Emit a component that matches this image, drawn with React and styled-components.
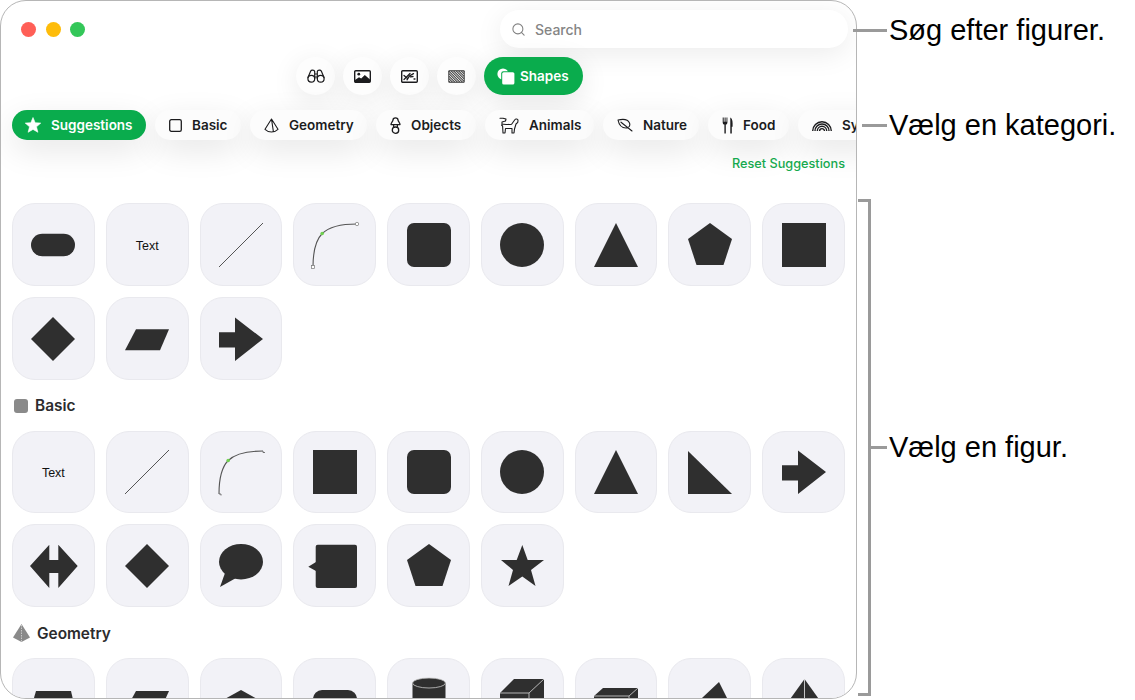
import React from "react";
import styled, { createGlobalStyle } from "styled-components";
import { Search } from "lucide-react";

const Global = createGlobalStyle`
  html, body { margin: 0; padding: 0; background: #fff; }
  body { font-family: Inter, "Liberation Sans", sans-serif; -webkit-font-smoothing: antialiased; }
`;

const Page = styled.div`
  position: relative;
  width: 1135px;
  height: 700px;
  overflow: hidden;
`;

const Window = styled.div`
  box-sizing: border-box;
  width: 857px;
  height: 699px;
  border: 1px solid #b6b6b6;
  border-radius: 26px;
  background: #fff;
  overflow: hidden;
`;

const TitleRow = styled.div`
  display: flex;
  align-items: center;
  justify-content: space-between;
  padding: 9px 8px 0 20px;
`;

const Lights = styled.div`
  display: flex;
  gap: 9.5px;
`;

const Light = styled.span`
  width: 15px;
  height: 15px;
  border-radius: 50%;
  background: ${(p) => p.$c};
`;

const SearchBox = styled.div`
  box-sizing: border-box;
  width: 348px;
  height: 38px;
  border-radius: 19px;
  background: #fff;
  box-shadow: 0 6px 28px rgba(0, 0, 0, 0.08);
  display: flex;
  align-items: center;
  gap: 9px;
  padding-left: 11px;
  color: #858585;
  font-size: 14px;
  font-weight: 500;
`;

const Tools = styled.div`
  display: flex;
  gap: 8px;
  margin: 9px 0 0 295px;
`;

const ToolButton = styled.div`
  width: 39px;
  height: 38px;
  border-radius: 50%;
  background: #fdfdfd;
  box-shadow: 0 6px 28px rgba(0, 0, 0, 0.09);
  display: flex;
  align-items: center;
  justify-content: center;
`;

const ShapesButton = styled.div`
  width: 99px;
  height: 38px;
  border-radius: 19px;
  background: #0aac4d;
  box-shadow: 0 6px 28px rgba(0, 0, 0, 0.1);
  color: #fff;
  font-size: 13.5px;
  font-weight: 600;
  display: flex;
  align-items: center;
  gap: 5px;
  padding-left: 13px;
  box-sizing: border-box;
`;

const Chips = styled.div`
  display: flex;
  gap: 9px;
  margin-top: 15px;
  padding-left: 11px;
`;

const Chip = styled.div`
  box-sizing: border-box;
  flex: none;
  width: ${(p) => p.$w}px;
  height: 30px;
  border-radius: 15px;
  padding-left: ${(p) => (p.$active ? 13 : 14)}px;
  display: flex;
  align-items: center;
  gap: 10px;
  font-size: 13.5px;
  font-weight: 600;
  color: ${(p) => (p.$active ? "#fff" : "#1c1c1e")};
  background: ${(p) => (p.$active ? "#0aac4d" : "#fcfcfc")};
  box-shadow: 0 10px 32px rgba(0, 0, 0, 0.1);
  white-space: nowrap;
`;

const ResetRow = styled.div`
  text-align: right;
  padding: 16px 11px 0 0;
  height: 16px;
  line-height: 16px;
  font-size: 12.7px;
  font-weight: 500;
  color: #16a94e;
`;

const Content = styled.div`
  padding: 31px 11px 0;
`;

const Grid = styled.div`
  display: grid;
  grid-template-columns: repeat(9, 1fr);
  gap: 11px;
`;

const Tile = styled.div`
  box-sizing: border-box;
  aspect-ratio: 1;
  border-radius: 23px;
  background: #f2f2f7;
  border: 1px solid #e9e9ee;
  padding-top: 1px;
  display: flex;
  align-items: center;
  justify-content: center;
`;

const TileText = styled.span`
  margin-top: 2px;
  font-family: "Liberation Sans", Arial, sans-serif;
  font-size: 12.5px;
  color: #111;
`;

const Heading = styled.div`
  display: flex;
  align-items: center;
  gap: 7px;
  height: 20px;
  margin: 16px 0 15px;
  padding-left: ${(p) => p.$pl}px;
  font-size: 15.4px;
  font-weight: 600;
  color: #2c2c2e;
`;

const HeadSwatch = styled.span`
  width: 14px;
  height: 14px;
  border-radius: 3px;
  background: #8a8a8a;
`;

const Art = styled.svg`
  width: 44px;
  height: 44px;
  overflow: visible;
  flex: none;
`;

const Callout = styled.div`
  position: absolute;
  top: ${(p) => p.$top}px;
  left: ${(p) => p.$left}px;
  height: 0;
  display: flex;
  align-items: center;
`;

const Lead = styled.span`
  width: ${(p) => p.$w}px;
  height: 3px;
  background: #9a9a9a;
`;

const CalloutText = styled.span`
  margin-left: 2px;
  font-family: "Liberation Sans", Arial, sans-serif;
  font-size: 29px;
  color: #000;
  white-space: nowrap;
`;

const Bracket = styled.div`
  position: absolute;
  left: 858px;
  top: 199px;
  width: 10px;
  height: 491px;
  border: solid #9a9a9a;
  border-width: 3px 3px 3px 0;
`;

const D = "#2f2f2f";

const Curve = ({ hooks }) => (
  <Art viewBox="0 0 44 44">
    <path d="M0 44 C0 12 10 1 44 1" fill="none" stroke="#555" strokeWidth="1.1" />
    <circle cx="9.2" cy="10.5" r="1.8" fill="#6fd04f" />
    {hooks ? (
      <path d="M0 44 h2 v1.5 M44 1 v1.5 h2" fill="none" stroke="#555" strokeWidth="0.8" />
    ) : (
      <>
        <rect x="-1.5" y="42.5" width="3" height="3" fill="#fff" stroke="#777" strokeWidth="0.7" />
        <circle cx="44" cy="1" r="1.7" fill="#fff" stroke="#777" strokeWidth="0.7" />
      </>
    )}
  </Art>
);

const P = ({ pts }) => (
  <Art viewBox="0 0 44 44">
    <polygon points={pts} fill={D} />
  </Art>
);

const Pts = {
  tri: "22,0 44,44 0,44",
  pent: "22,0 44,16 35.5,42 8.5,42 0,16",
  dia: "22,0 44,22 22,44 0,22",
  para: "11,12.3 44,12.3 35,33.3 0,33.3",
  arrow: "0,15.3 16,15.3 16,0.5 44,22 16,44 16,30.5 0,30.5",
  right: "0,1 44,44 0,44",
  dbl: "-1,22 18.3,0.7 18.3,16 27.3,16 27.3,0.7 46.7,22 27.3,44 27.3,29 18.3,29 18.3,44",
  star: "22.3,1 27.7,16 44,16 31,26 35.5,42 22.3,32.5 8.5,42 13,26 1,16 16.7,16",
  trap: "5,13 40,13 44,30 0,30",
  para2: "11,13 44,13 35,33 0,33",
  house: "22,12 40,22 40,40 4,40 4,22",
};

const tile = (c, i) => <Tile key={i}>{c}</Tile>;
const pill = <Art viewBox="0 0 44 44"><rect y="10.7" width="44" height="22.6" rx="11.3" fill={D} /></Art>;
const line = <Art viewBox="0 0 44 44"><line x1="0" y1="44" x2="44" y2="0" stroke="#555" strokeWidth="1" /></Art>;
const rsq = <Art viewBox="0 0 44 44"><rect width="44" height="44" rx="7" fill={D} /></Art>;
const circ = <Art viewBox="0 0 44 44"><circle cx="22" cy="22" r="22" fill={D} /></Art>;
const sq = <Art viewBox="0 0 44 44"><rect width="44" height="44" fill={D} /></Art>;
const text = <TileText>Text</TileText>;
const bubble = (
  <Art viewBox="0 0 44 44">
    <ellipse cx="22" cy="17.7" rx="22" ry="17.7" fill={D} />
    <polygon points="6,29 1,43 17,34" fill={D} />
  </Art>
);
const callout = (
  <Art viewBox="0 0 44 44">
    <rect x="2.7" y="0.7" width="41.3" height="43.3" rx="2" fill={D} />
    <polygon points="-4.7,22.7 3,18 3,27" fill={D} />
  </Art>
);

const geometry = [
  <P pts={Pts.trap} />,
  <P pts={Pts.para2} />,
  <P pts={Pts.house} />,
  <Art viewBox="0 0 44 44"><rect y="12" width="44" height="32" rx="9" fill={D} /></Art>,
  <Art viewBox="0 0 44 44">
    <rect x="5.5" y="5" width="33" height="39" fill={D} />
    <ellipse cx="22" cy="5" rx="16.5" ry="5" fill={D} stroke="#c9c9c9" strokeWidth="0.8" />
  </Art>,
  <Art viewBox="0 0 44 44">
    <polygon points="14,1 44,1 44,40 0,40 0,15" fill={D} />
    <path d="M0 15 H29 V40 M29 15 L44 1" fill="none" stroke="#c4c4c4" strokeWidth="0.9" />
  </Art>,
  <Art viewBox="0 0 44 44">
    <polygon points="9,10 44,10 44,40 0,40 0,18" fill={D} />
    <path d="M0 18 H35 V40 M35 18 L44 10" fill="none" stroke="#c4c4c4" strokeWidth="0.9" />
  </Art>,
  <P pts="31,4 44,30 0,30 14,20" />,
  <Art viewBox="0 0 44 44">
    <polygon points="22.5,1 44,31 1,31" fill={D} />
    <line x1="22.5" y1="1" x2="22.5" y2="31" stroke="#d6d6d6" strokeWidth="0.9" />
  </Art>,
];

const suggestions = [pill, text, line, <Curve />, rsq, circ, <P pts={Pts.tri} />, <P pts={Pts.pent} />, sq, <P pts={Pts.dia} />, <P pts={Pts.para} />, <P pts={Pts.arrow} />];
const basic = [text, line, <Curve hooks />, sq, rsq, circ, <P pts={Pts.tri} />, <P pts={Pts.right} />, <P pts={Pts.arrow} />, <P pts={Pts.dbl} />, <P pts={Pts.dia} />, bubble, callout, <P pts={Pts.pent} />, <P pts={Pts.star} />];

const Stroke = { fill: "none", stroke: "#1c1c1e", strokeWidth: 1.3, strokeLinecap: "round", strokeLinejoin: "round" };

const Ic = styled.svg`
  flex: none;
  display: block;
`;

const BinocularsIcon = () => (
  <Ic width="18" height="14" viewBox="0 0 18 14" {...Stroke} strokeWidth="1.2">
    <circle cx="4.3" cy="9.7" r="3.4" />
    <circle cx="13.7" cy="9.7" r="3.4" />
    <path d="M1 8.6 L3.6 2.3 C4.2 .8 7.4 .8 7.7 2.6 V9.5 M17 8.6 L14.4 2.3 C13.8 .8 10.6 .8 10.3 2.6 V9.5 M7.7 5 H10.3 M7.7 8 H10.3" />
  </Ic>
);
const ImageIcon = () => (
  <Ic width="17" height="13" viewBox="0 0 17 13">
    <rect x=".7" y=".7" width="15.6" height="11.6" rx="1" fill="#fff" stroke="#1c1c1e" strokeWidth="1.4" />
    <circle cx="4.8" cy="4.2" r="1.4" fill="#1c1c1e" />
    <path d="M1 12 V10 L5 7.2 L7.2 8.4 L10.8 5 L16 9.4 V12 Z" fill="#1c1c1e" />
  </Ic>
);
const StickerIcon = () => (
  <Ic width="17" height="13" viewBox="0 0 17 13">
    <rect x=".7" y=".7" width="15.6" height="11.6" rx="1" fill="#fff" stroke="#1c1c1e" strokeWidth="1.4" />
    <path d="M3 5.5 L6 8 M3 9.5 L6 6.5 L9 3.5 M6 9.8 L8.5 6 L12.5 3.6 M9.5 6.8 L12 6.5 M13 9 L14 9" fill="none" stroke="#1c1c1e" strokeWidth="1.3" strokeLinecap="round" />
  </Ic>
);
const HatchIcon = () => (
  <Ic width="17" height="13" viewBox="0 0 17 13">
    <clipPath id="hatch"><rect x="1.2" y="1.2" width="14.6" height="10.6" /></clipPath>
    <rect x=".3" y=".3" width="16.4" height="12.4" rx="1" fill="#333" />
    <rect x="1.2" y="1.2" width="14.6" height="10.6" fill="#5e5e5e" />
    <g clipPath="url(#hatch)">
      {[-9, -6.5, -4, -1.5, 1, 3.5, 6, 8.5, 11, 13.5].map((x) => (
        <line key={x} x1={x} y1="0" x2={x + 13} y2="13" stroke="#dadada" strokeWidth="1" />
      ))}
    </g>
  </Ic>
);
const ShapesIcon = () => (
  <Ic width="18" height="17" viewBox="0 0 18 17">
    <circle cx="6" cy="6" r="5.6" fill="#fff" />
    <rect x="4.2" y="3.2" width="13.6" height="13.6" rx="2.2" fill="#0aac4d" />
    <rect x="5.2" y="4.2" width="12.2" height="12.4" rx="1.6" fill="#fff" />
  </Ic>
);

const StarIcon = () => (
  <Ic width="16" height="16" viewBox="0 0 16 16">
    <polygon points="8,.5 10.2,5.7 15.8,6.1 11.5,9.8 12.9,15.3 8,12.4 3.1,15.3 4.5,9.8 .2,6.1 5.8,5.7" fill="#fff" stroke="#fff" strokeWidth=".6" strokeLinejoin="round" />
  </Ic>
);
const BasicIcon = () => (
  <Ic width="13" height="13" viewBox="0 0 13 13" {...Stroke}>
    <rect x=".7" y=".7" width="11.6" height="11.6" rx="1.6" />
  </Ic>
);
const GeoIcon = () => (
  <Ic width="15" height="15" viewBox="0 0 15 15" {...Stroke} strokeWidth="1.1">
    <path d="M7.5 1 L14 11.3 C12 13.2 9.8 14 7.5 14 C5.2 14 3 13.2 1 11.3 Z M7.5 1 L9.4 13.6" />
  </Ic>
);
const LampIcon = () => (
  <Ic width="11" height="17" viewBox="0 0 11 17" {...Stroke}>
    <path d="M1 7.6 C1 5.5 3 4.5 3 3 C3 1.6 4 .8 5.5 .8 C7 .8 8 1.6 8 3 C8 4.5 10 5.5 10 7.6 Z" />
    <path d="M3.6 7.6 V10 M7.4 7.6 V10" />
    <rect x="2.3" y="10" width="6.4" height="6.3" rx="3.1" />
  </Ic>
);
const DogIcon = () => (
  <Ic width="20" height="17" viewBox="0 0 20 17" {...Stroke} strokeWidth="1.1">
    <path d="M1 1.2 H4 L7 2 L6.5 4 L3 5 V7 C4 7.5 10 7.6 12.6 7.2 L16 2.5 C16.5 1.6 18.8 1.8 19 3 L18.8 5.3 L17 7 L15.5 12 L15 16 H13 L13 11.5 H6.5 L6 16 H4 L3.6 9 L2.5 8" />
  </Ic>
);
const LeafIcon = () => (
  <Ic width="16" height="14" viewBox="0 0 16 14" {...Stroke} strokeWidth="1.1">
    <path d="M1 2 C6 .8 11 1.5 12.5 5 C13.5 7.5 12 10 9 10 C5 10 2 7 1 2 Z M4 4.2 L15 13" />
  </Ic>
);
const FoodIcon = () => (
  <Ic width="11" height="17" viewBox="0 0 11 17">
    <path d="M.7 .5 V5.4 C.7 6.6 1.5 7.4 2.4 7.6 V16.5 H3.8 V7.6 C4.7 7.4 5.4 6.6 5.4 5.4 V.5 H4.5 V4.8 H3.6 V.5 H2.6 V4.8 H1.7 V.5 Z" fill="#1c1c1e" />
    <path d="M8.3 .5 C9.8 1 10.6 3.6 10.6 6.2 V9.8 H9.8 V16.5 H8.3 Z" fill="#1c1c1e" />
  </Ic>
);
const RainbowIcon = () => (
  <Ic width="20" height="11" viewBox="0 0 20 11" fill="none" stroke="#1c1c1e" strokeWidth="1.4">
    <path d="M.7 11 A9.3 9.3 0 0 1 19.3 11 M3 11 A7 7 0 0 1 17 11 M5.3 11 A4.7 4.7 0 0 1 14.7 11 M7.6 11 A2.4 2.4 0 0 1 12.4 11" />
  </Ic>
);
const Pyramid = () => (
  <Ic width="17" height="18" viewBox="0 0 17 18">
    <polygon points="8.5,0 17,13.5 8.5,18 0,13.5" fill="#8a8a8a" />
    <line x1="8.5" y1="1" x2="8.5" y2="18" stroke="#c8c8c8" strokeWidth="1" strokeDasharray="1.5 1" />
  </Ic>
);

const chips = [
  { w: 134, label: "Suggestions", icon: <StarIcon />, active: true },
  { w: 86, label: "Basic", icon: <BasicIcon /> },
  { w: 117, label: "Geometry", icon: <GeoIcon /> },
  { w: 100, label: "Objects", icon: <LampIcon /> },
  { w: 109, label: "Animals", icon: <DogIcon /> },
  { w: 96, label: "Nature", icon: <LeafIcon /> },
  { w: 81, label: "Food", icon: <FoodIcon /> },
  { w: 90, label: "Sy", icon: <RainbowIcon /> },
];

export default function App() {
  return (
    <Page>
      <Global />
      <Window>
        <TitleRow>
          <Lights>
            <Light $c="#ff5f57" />
            <Light $c="#febc0a" />
            <Light $c="#34c759" />
          </Lights>
          <SearchBox>
            <Search size={15} color="#808080" strokeWidth={1.7} />
            Search
          </SearchBox>
        </TitleRow>
        <Tools>
          <ToolButton><BinocularsIcon /></ToolButton>
          <ToolButton><ImageIcon /></ToolButton>
          <ToolButton><StickerIcon /></ToolButton>
          <ToolButton><HatchIcon /></ToolButton>
          <ShapesButton><ShapesIcon />Shapes</ShapesButton>
        </Tools>
        <Chips>
          {chips.map((c) => (
            <Chip key={c.label} $w={c.w} $active={c.active}>
              {c.icon}
              {c.label}
            </Chip>
          ))}
        </Chips>
        <ResetRow>Reset Suggestions</ResetRow>
        <Content>
          <Grid>{suggestions.map(tile)}</Grid>
          <Heading $pl={2}><HeadSwatch />Basic</Heading>
          <Grid>{basic.map(tile)}</Grid>
          <Heading $pl={1}><Pyramid />Geometry</Heading>
          <Grid>{geometry.map(tile)}</Grid>
        </Content>
      </Window>
      <Callout $top={30} $left={853}>
        <Lead $w={34} />
        <CalloutText>Søg efter figurer.</CalloutText>
      </Callout>
      <Callout $top={125} $left={862}>
        <Lead $w={25} />
        <CalloutText>Vælg en kategori.</CalloutText>
      </Callout>
      <Bracket />
      <Callout $top={447} $left={871}>
        <Lead $w={16} />
        <CalloutText>Vælg en figur.</CalloutText>
      </Callout>
    </Page>
  );
}
